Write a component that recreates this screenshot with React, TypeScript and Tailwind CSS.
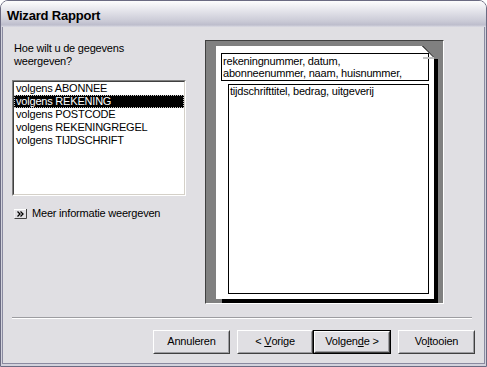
import React from "react";

const items = [
  "volgens ABONNEE",
  "volgens REKENING",
  "volgens POSTCODE",
  "volgens REKENINGREGEL",
  "volgens TIJDSCHRIFT",
];

function Button({
  children,
  width,
  isDefault,
  className = "",
}: {
  children: React.ReactNode;
  width: string;
  isDefault?: boolean;
  className?: string;
}) {
  const face = (
    <div className="flex h-full w-full border border-t-white border-l-white border-b-[#404040] border-r-[#404040]">
      <div className="flex h-full w-full items-center justify-center border border-t-[#e0dfe3] border-l-[#e0dfe3] border-b-[#9d9da1] border-r-[#9d9da1] pb-[1px]">
        {children}
      </div>
    </div>
  );
  return (
    <div className={`h-[24px] ${width} ${className} ${isDefault ? "border border-black" : ""}`}>
      {face}
    </div>
  );
}

export default function App() {
  return (
    <div className="h-[367px] w-[487px] overflow-hidden bg-white font-['Liberation_Sans',Arial,sans-serif] text-black">
      <div className="flex h-full flex-col rounded-t-[8px] border border-[#6b6b82]">
        {/* title bar */}
        <div className="h-[26px] rounded-t-[7px] bg-[linear-gradient(#fdfdfd,#e6e6ec_35%,#cacad6_78%,#bdbdcc_92%,#dcdce4)] pl-[6px] pt-[7px] text-[13px] font-bold leading-[16px] tracking-[-0.2px]">
          Wizard Rapport
        </div>

        {/* body frame */}
        <div className="flex flex-1 flex-col border-x border-b-2 border-[#d2d2dc]">
          <div className="flex flex-1 flex-col border-x border-b border-[#8a8aa0] bg-[#e0dfe3] pl-[9px] pt-[13px] text-[11px] tracking-[-0.2px]">
            <div className="flex items-start">
              {/* left column */}
              <div className="flex w-[174px] flex-col">
                <div className="mt-[2px] pl-[2px] leading-[13px]">
                  Hoe wilt u de gegevens
                  <br />
                  weergeven?
                </div>

                <div className="mt-[12px] h-[116px] border border-t-[#808080] border-l-[#808080] border-b-white border-r-white">
                  <div className="h-full border border-t-[#404040] border-l-[#404040] border-b-[#d4d0c8] border-r-[#d4d0c8] bg-white">
                    {items.map((it, i) => (
                      <div
                        key={it}
                        className={`h-[13px] px-[2px] leading-[13px] ${
                          i === 1
                            ? "bg-black text-white outline-1 -outline-offset-1 outline-dotted outline-[#c8c8c8]"
                            : ""
                        }`}
                      >
                        {it}
                      </div>
                    ))}
                  </div>
                </div>

                <div className="mt-[11px] flex items-center gap-[5px] pl-[2px] leading-[13px]">
                  <svg width="13" height="10" viewBox="0 0 13 10" className="shrink-0">
                    <rect x="0" y="0" width="13" height="10" fill="#e0dfe3" />
                    <path d="M0 9.5V0.5H12.5" stroke="#fff" fill="none" />
                    <path d="M0.5 9.5H12.5V0" stroke="#404040" fill="none" />
                    <path d="M3.5 2.5L6 5L3.5 7.5M6.5 2.5L9 5L6.5 7.5" stroke="#000" strokeWidth="1.3" fill="none" />
                  </svg>
                  <span>Meer informatie weergeven</span>
                </div>
              </div>

              {/* preview frame */}
              <div className="ml-[19px] h-[264px] w-[239px] border border-t-[#404040] border-l-[#404040] border-b-white border-r-white bg-[#808080] pl-[10px] pt-[5px]">
                <div className="relative h-[253px] w-[218px] bg-white pl-[5px] pt-[7px] shadow-[5px_5px_0_-1px_#000]">
                  <div className="h-[28px] w-[208px] overflow-hidden border border-black px-[1px] pt-[1px] leading-[12px]">
                    rekeningnummer, datum,
                    <br />
                    abonneenummer, naam, huisnummer,
                  </div>
                  <div className="ml-[7px] mt-[3px] h-[210px] w-[201px] border border-black px-[1px] leading-[13px]">
                    tijdschrifttitel, bedrag, uitgeverij
                  </div>
                  <svg
                    width="16"
                    height="14"
                    viewBox="0 0 16 14"
                    className="absolute right-[-4px] top-0"
                  >
                    <polygon points="0,0 16,0 16,13 12,13 12,11" fill="#808080" />
                    <rect x="1" y="11" width="11" height="2" fill="#c0c0c0" />
                    <path d="M0.5 0L11.5 11" stroke="#000" strokeWidth="1" />
                  </svg>
                </div>
              </div>
            </div>

            {/* separator */}
            <div className="mt-[13px] h-[2px] w-[460px] border-t border-b border-t-[#9d9da1] border-b-white" />

            {/* buttons */}
            <div className="mt-[11px] flex pl-[141px]">
              <Button width="w-[77px]">Annuleren</Button>
              <Button width="w-[76px]" className="ml-[7px]">
                &lt;&nbsp;<u className="underline-offset-1">V</u>orige
              </Button>
              <Button width="w-[78px]" isDefault>
                Volgen<u className="underline-offset-1">d</u>e &gt;
              </Button>
              <Button width="w-[77px]" className="ml-[7px]">
                Vo<u className="underline-offset-1">l</u>tooien
              </Button>
            </div>
          </div>
        </div>
      </div>
    </div>
  );
}
